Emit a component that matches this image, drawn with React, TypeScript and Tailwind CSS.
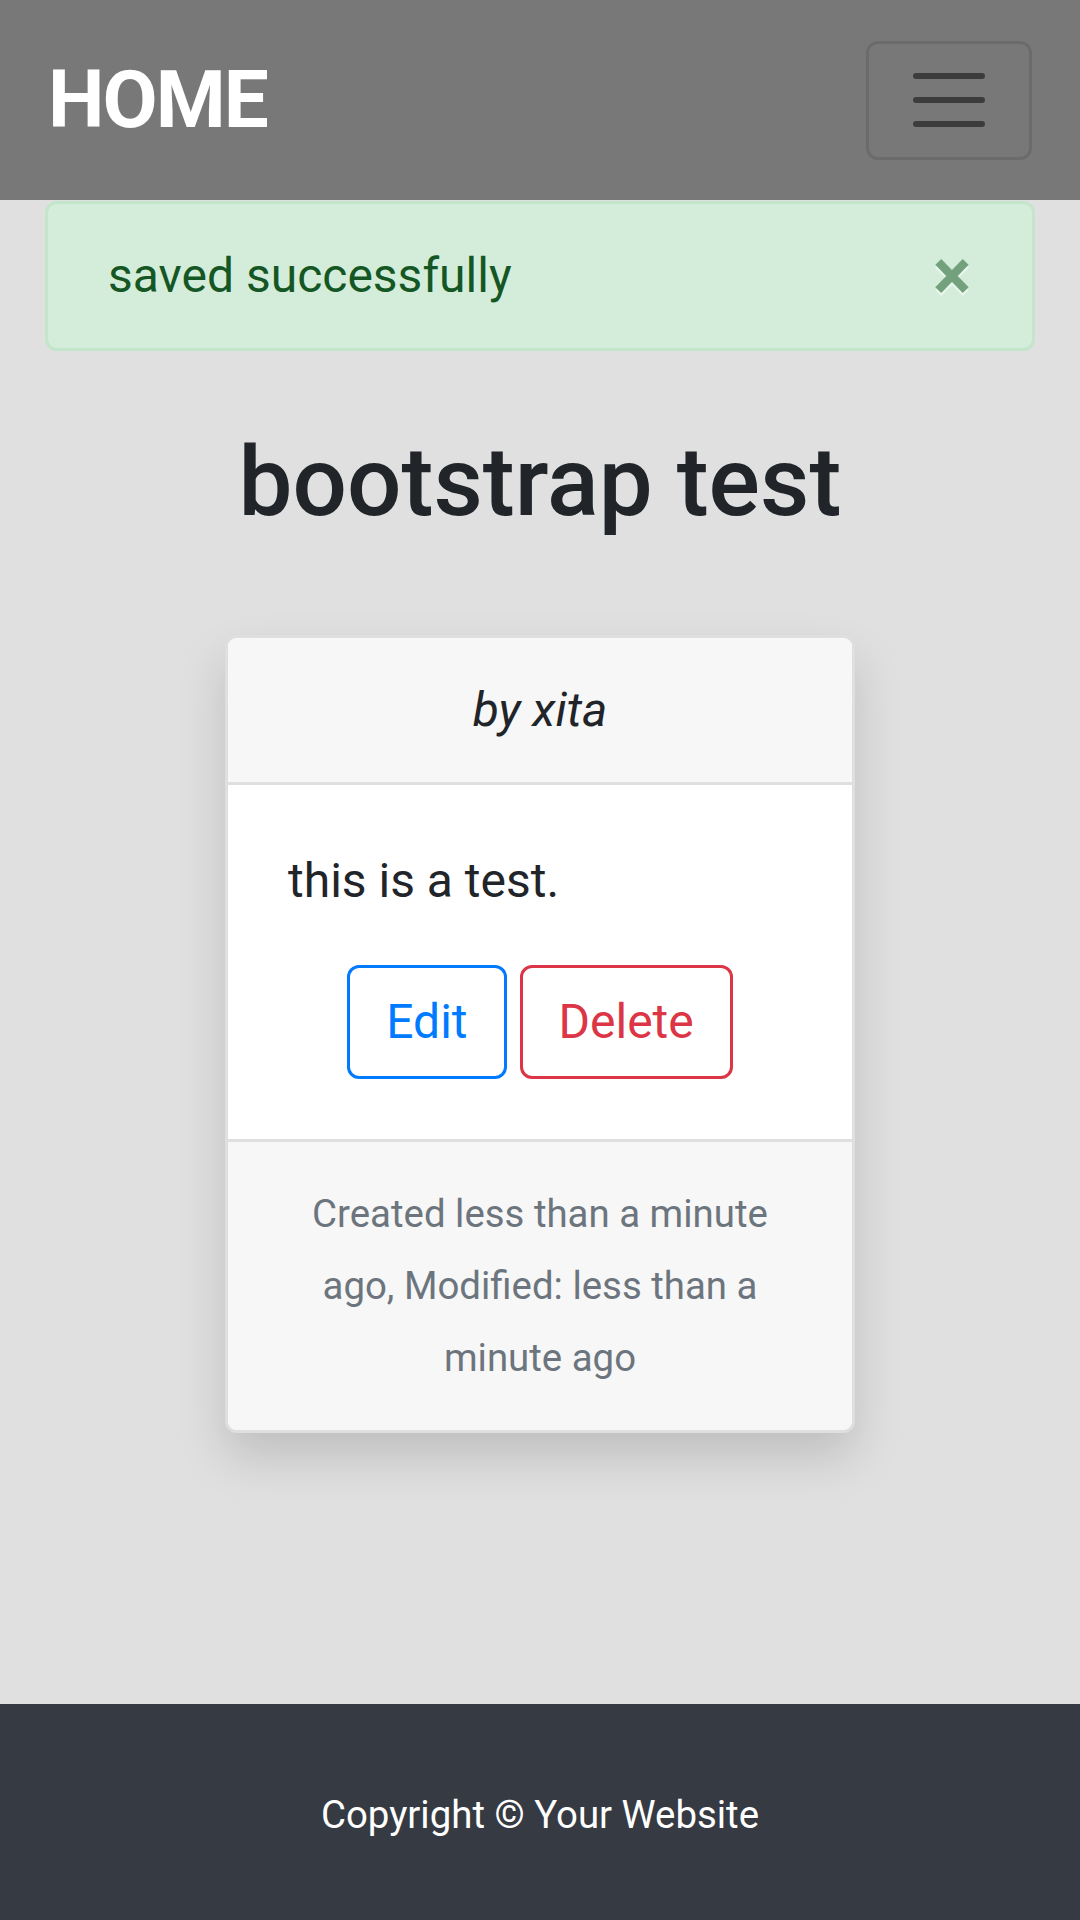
import React from "react";

export default function App() {
  return (
    <div className="min-h-[1920px] flex flex-col bg-[#e0e0e0] font-['Roboto',sans-serif] text-[#212529]">
      <nav className="h-[200px] bg-[#787878] flex items-center justify-between px-[48px]">
        <a className="text-white font-bold text-[80px] tracking-[-2px] leading-none">HOME</a>
        <button className="w-[166px] h-[119px] rounded-[12px] border-[3px] border-[rgba(0,0,0,0.1)] flex items-center justify-center">
          <svg width="90" height="90" viewBox="0 0 30 30">
            <path
              d="M4 7h22M4 15h22M4 23h22"
              stroke="rgba(0,0,0,0.5)"
              strokeWidth="2"
              strokeLinecap="round"
              strokeMiterlimit="10"
            />
          </svg>
        </button>
      </nav>
      <main className="flex-1 px-[45px]">
        <div className="mt-[1px] flex items-center justify-between bg-[#d4edda] border-[3px] border-[#c3e6cb] rounded-[12px] text-[#155724] text-[48px] leading-[72px] pl-[60px] py-[36px]">
          <span>saved successfully</span>
          <span className="font-bold text-[72px] leading-none w-[72px] text-center mr-[44px] opacity-50 [text-shadow:0_3px_0_#fff]">×</span>
        </div>
        <h1 className="mt-[74px] text-center text-[96px] font-medium leading-[1.2]">bootstrap test</h1>
        <div className="mt-[95px] mx-auto w-[630px] bg-white border-[3px] border-[rgba(0,0,0,0.125)] rounded-[12px] overflow-hidden shadow-[0_24px_48px_rgba(0,0,0,0.15)]">
          <div className="bg-[#f7f7f7] border-b-[3px] border-[#dfdfdf] px-[60px] py-[36px] text-center italic text-[48px] leading-[72px]">by xita</div>
          <div className="p-[60px] text-[48px] leading-[72px]">
            <p className="mb-[48px]">this is a test.</p>
            <div className="flex justify-center gap-[13px]">
              <button className="border-[3px] border-[#007bff] text-[#007bff] rounded-[12px] px-[36px] py-[18px] text-[48px] leading-[72px]">Edit</button>
              <button className="border-[3px] border-[#dc3545] text-[#dc3545] rounded-[12px] px-[36px] py-[18px] text-[48px] leading-[72px]">Delete</button>
            </div>
          </div>
          <div className="bg-[#f7f7f7] border-t-[3px] border-[#dfdfdf] px-[60px] py-[36px] text-center text-[#6c757d] text-[38.4px] leading-[72px]">
            Created less than a minute ago, Modified: less than a minute ago
          </div>
        </div>
      </main>
      <footer className="h-[216px] pt-[6px] bg-[#363a42] flex items-center justify-center text-white text-[38.4px] leading-[72px]">
        Copyright © Your Website
      </footer>
    </div>
  );
}
